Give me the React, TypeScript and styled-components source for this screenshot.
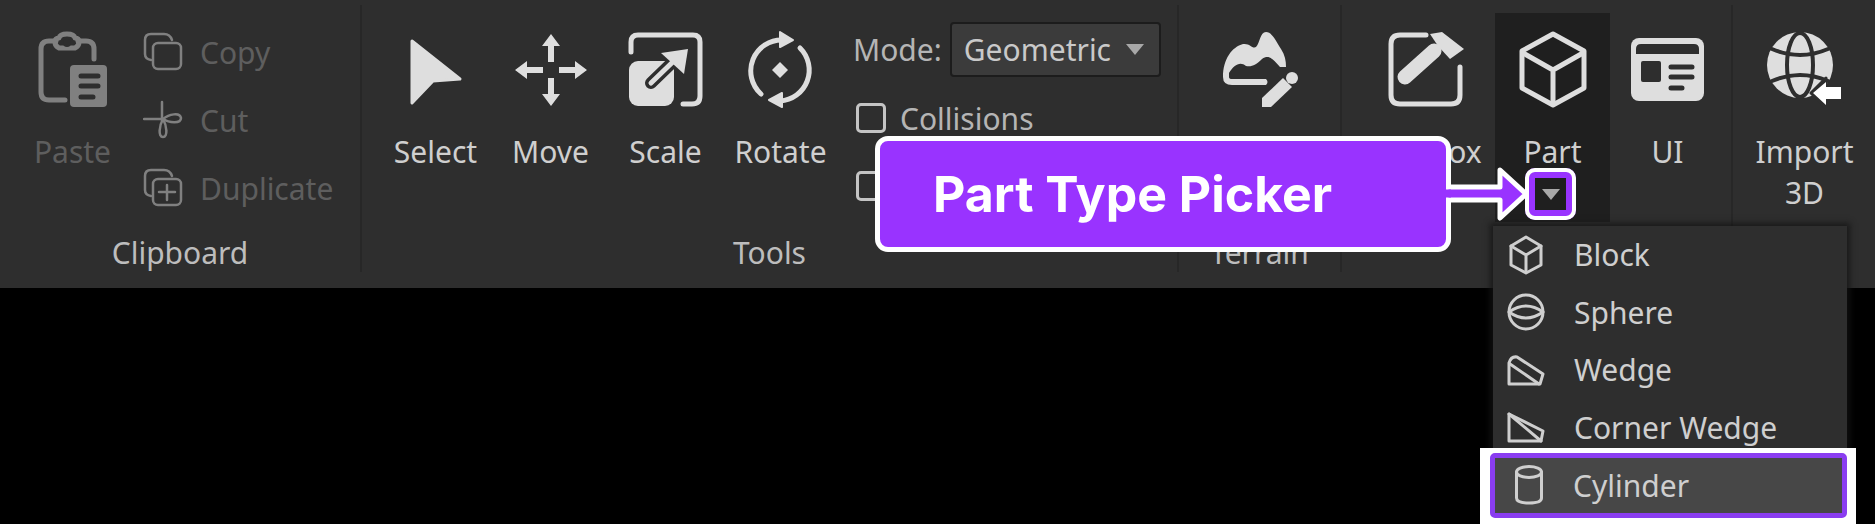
import React from "react";
import styled, { createGlobalStyle } from "styled-components";

const Global = createGlobalStyle`
  html, body { margin: 0; padding: 0; background: #000; overflow: hidden; }
  body { font-family: "Noto Sans", "Open Sans", sans-serif; }
`;

const Page = styled.div`
  position: relative;
  width: 1875px;
  height: 524px;
  background: #000;
  overflow: hidden;
`;
const Ribbon = styled.div`
  display: flex;
  height: 288px;
  background: #2e2e2e;
`;
const Group = styled.section<{ $width: number; $pad: number }>`
  width: ${(p) => p.$width}px;
  flex: none;
  box-sizing: border-box;
  padding-left: ${(p) => p.$pad}px;
  display: flex;
  flex-direction: column;
`;
const GroupBody = styled.div`
  height: 232px;
  display: flex;
  align-items: flex-start;
`;
const GroupLabel = styled.div<{ $shift?: number }>`
  height: 42px;
  line-height: 42px;
  font-size: 30px;
  text-align: center;
  color: #bdbdbd;
  margin-left: ${(p) => -(p.$shift ?? 0)}px;
`;
const Divider = styled.div`
  flex: none;
  width: 2px;
  margin: 5px 0 16px;
  background: #272727;
`;
const ToolButton = styled.div<{ $active?: boolean; $dim?: boolean }>`
  width: 115px;
  flex: none;
  display: flex;
  flex-direction: column;
  align-items: center;
  box-sizing: border-box;
  padding-top: ${(p) => (p.$active ? 20 : 33)}px;
  margin-top: ${(p) => (p.$active ? 13 : 0)}px;
  height: ${(p) => (p.$active ? 209 : 222)}px;
  background: ${(p) => (p.$active ? "#1f1f1f" : "transparent")};
  color: ${(p) => (p.$dim ? "#5e5e5e" : "#cfcfcf")};
`;
const IconSlot = styled.div`
  height: 74px;
  display: flex;
  align-items: center;
  justify-content: center;
`;
const ToolLabel = styled.div`
  margin-top: 24px;
  font-size: 30px;
  line-height: 41px;
  text-align: center;
  white-space: nowrap;
`;
const SmallColumn = styled.div`
  margin-left: 13px;
  padding-top: 18px;
  display: flex;
  flex-direction: column;
`;
const SmallRow = styled.div`
  height: 68px;
  display: flex;
  align-items: center;
  gap: 17px;
  font-size: 30px;
  color: #5e5e5e;
`;
const OptionColumn = styled.div`
  margin-left: 15px;
  padding-top: 22px;
  display: flex;
  flex-direction: column;
  color: #b5b5b5;
  font-size: 30px;
`;
const ModeRow = styled.div`
  height: 55px;
  display: flex;
  align-items: center;
  gap: 8px;
  margin-bottom: 7px;
`;
const Select = styled.div`
  width: 211px;
  height: 55px;
  box-sizing: border-box;
  padding: 0 15px 0 12px;
  display: flex;
  align-items: center;
  justify-content: space-between;
  background: #3b3b3b;
  border: 2px solid #1c1c1c;
  border-radius: 4px;
  color: #c9c9c9;
`;
const Caret = styled.span`
  width: 0;
  height: 0;
  border-left: 9px solid transparent;
  border-right: 9px solid transparent;
  border-top: 11px solid #a8a8a8;
`;
const CheckRow = styled.label`
  height: 68px;
  display: flex;
  align-items: center;
  gap: 14px;
  margin-left: 3px;
`;
const Check = styled.span`
  width: 30px;
  height: 30px;
  box-sizing: border-box;
  border: 3px solid #c4c4c4;
  border-radius: 5px;
`;
const Glyph = styled.svg<{ $tone?: string }>`
  display: block;
  flex: none;
  color: ${(p) => p.$tone ?? "#dedede"};
`;
const Callout = styled.div`
  position: absolute;
  left: 875px;
  top: 136px;
  width: 576px;
  height: 116px;
  box-sizing: border-box;
  padding-left: 53px;
  display: flex;
  align-items: center;
  background: #9933ff;
  border: 5px solid #fff;
  border-radius: 13px;
  color: #fff;
  font-family: Inter, "Noto Sans", sans-serif;
  font-size: 50px;
  font-weight: 700;
  white-space: nowrap;
`;
const Pointer = styled.svg`
  position: absolute;
  left: 1446px;
  top: 160px;
`;
const Marker = styled.div`
  position: absolute;
  left: 1525px;
  top: 168px;
  width: 51px;
  height: 52px;
  box-sizing: border-box;
  display: flex;
  align-items: center;
  justify-content: center;
  background: #1f1f1f;
  border: 10px solid #9933ff;
  border-radius: 10px;
  outline: 4px solid #fff;
  outline-offset: -4px;
  box-shadow: inset 0 0 0 1px #1f1f1f;
`;
const Menu = styled.div`
  position: absolute;
  left: 1493px;
  top: 226px;
  width: 354px;
  background: #2e2e2e;
  box-shadow: 0 0 6px 3px rgba(20, 20, 20, 0.8);
`;
const MenuRow = styled.div`
  height: 57.5px;
  display: flex;
  align-items: center;
  font-size: 30px;
  color: #cfcfcf;
  white-space: nowrap;
`;
const MenuIconSlot = styled.div`
  width: 81px;
  padding-left: 14px;
  box-sizing: border-box;
  flex: none;
`;
const Highlight = styled.div`
  position: relative;
  margin: -8px -9px 0 -13px;
  padding: 5px 9px 6px 10px;
  background: #fff;
`;
const HighlightInner = styled.div`
  height: 65px;
  box-sizing: border-box;
  border: 5px solid #8a3df0;
  border-radius: 5px;
  background: #474747;
  display: flex;
  align-items: center;
  font-size: 30px;
  color: #cfcfcf;
`;
const CylinderSlot = styled.div`
  width: 78px;
  padding-left: 19px;
  box-sizing: border-box;
  flex: none;
`;

const Box = (x: number, y: number, w: number, h: number) => ({
  viewBox: `${x} ${y} ${w} ${h}`,
  width: w,
  height: h,
  fill: "none",
  stroke: "currentColor",
  strokeLinecap: "round" as const,
  strokeLinejoin: "round" as const,
});

const PasteIcon = () => (
  <Glyph $tone="#808080" {...Box(40, 31, 72, 78)} strokeWidth={5}>
    <path d="M68 100H52q-8 0-8-8V49q0-8 8-8h7M81 41h8q8 0 8 8v10" />
    <path d="M58 42q0-4 4-4 1-4 8-4t8 4q4 0 4 4t-4 6H62q-4-2-4-6Z" />
    <circle cx="70" cy="43" r="4" fill="#2e2e2e" strokeWidth={0} />
    <path d="M77 65h29q4 0 4 4v34q0 4-4 4H77q-4 0-4-4V69q0-4 4-4Z" fill="currentColor" strokeWidth={0} />
    <path d="M84 76h17M84 86h17M84 97h12" stroke="#2e2e2e" strokeWidth={5} />
  </Glyph>
);
const CopyIcon = () => (
  <Glyph $tone="#808080" {...Box(142, 30, 40, 40)} strokeWidth={2.5}>
    <path d="M150 58q-6-1-6-6V38q0-6 6-6h13q6 0 8 6" />
    <rect x="152" y="41" width="28" height="26" rx="5" />
  </Glyph>
);
const CutIcon = () => (
  <Glyph $tone="#808080" {...Box(142, 98, 40, 40)} strokeWidth={2.5}>
    <path d="M161 100v19M143 117h20" />
    <path d="M162 117c6-5 17-7 18-1 0 6-12 5-18 1Z" />
    <path d="M162 117c-4 7-5 18 0 18 5 0 4-11 0-18Z" />
  </Glyph>
);
const DuplicateIcon = () => (
  <Glyph $tone="#808080" {...Box(142, 166, 40, 40)} strokeWidth={2.5}>
    <path d="M150 194q-6-1-6-6v-14q0-6 6-6h13q6 0 8 6" />
    <rect x="152" y="177" width="28" height="26" rx="5" />
    <path d="M166 183v15M158 190h16" />
  </Glyph>
);
const SelectIcon = () => (
  <Glyph {...Box(406, 34, 60, 74)} fill="currentColor" strokeWidth={3}>
    <path d="M412 42 460 80 433 82 412 104Z" />
  </Glyph>
);
const MoveIcon = () => (
  <Glyph {...Box(512, 33, 76, 76)} strokeWidth={0} fill="currentColor">
    <path d="M550 35 559 47H553V63H547V47H541ZM550 107 541 95H547V79H553V95H559ZM514 71 526 62V68H542V74H526V80ZM586 71 574 80V74H558V68H574V62Z" />
  </Glyph>
);
const ScaleIcon = () => (
  <Glyph {...Box(626, 32, 78, 78)} strokeWidth={5}>
    <path d="M630 53V43q0-7 7-7h55q7 0 7 7v54q0 8-8 8h-9" />
    <rect x="628" y="62" width="45" height="45" rx="9" fill="currentColor" strokeWidth={0} />
    <path d="M650 84 680 55" stroke="#2e2e2e" strokeWidth={12} />
    <path d="M650 84 680 55" strokeWidth={5} />
    <path d="M660 54 687 50 683 75" strokeWidth={0} fill="currentColor" />
  </Glyph>
);
const RotateIcon = () => (
  <Glyph {...Box(744, 32, 74, 78)} strokeWidth={5}>
    <path d="M761 95A31 31 0 0 1 783 41" />
    <path d="M800 49A31 31 0 0 1 780 102" />
    <path d="M780 33 793 41 780 48Z" fill="currentColor" strokeWidth={2} />
    <path d="M782 94 769 101 782 108Z" fill="currentColor" strokeWidth={2} />
    <path d="M780 63 788 71 780 79 772 71Z" fill="currentColor" strokeWidth={0} />
  </Glyph>
);
const TerrainIcon = () => (
  <Glyph {...Box(1220, 31, 80, 80)} strokeWidth={0} fill="currentColor">
    <path d="M1223 78C1223 60 1232 48 1243 45 1250 44 1252 50 1256 48 1260 44 1260 33 1266 33 1272 33 1276 42 1281 50 1285 56 1286 62 1286 68L1280 68C1272 58 1268 56 1262 60 1256 66 1252 68 1246 67 1240 62 1234 66 1229 74L1229 78Q1229 80 1232 80H1266Q1269 83 1266 86H1232Q1223 86 1223 78Z" />
    <path d="M1262 99 1283 79 1292 88 1271 108H1262Z" />
    <circle cx="1292" cy="79" r="6" />
  </Glyph>
);
const ToolboxIcon = () => (
  <Glyph {...Box(1386, 32, 78, 78)} strokeWidth={5}>
    <path d="M1424 36H1398q-9 0-9 9v51q0 9 9 9h51q9 0 9-9V68" />
    <path d="M1403 78 1432 52" strokeWidth={15} />
    <path d="M1428 35 1440 33 1462 50 1448 60 1436 47Z" fill="currentColor" strokeWidth={0} />
  </Glyph>
);
const PartIcon = () => (
  <Glyph {...Box(1518, 32, 68, 78)} strokeWidth={5}>
    <path d="M1552 35 1583 52V89L1552 106 1521 89V52Z" />
    <path d="M1522 54 1552 71 1582 54M1552 71V105" />
  </Glyph>
);
const UiIcon = () => (
  <Glyph {...Box(1628, 38, 76, 66)} strokeWidth={0}>
    <rect x="1629" y="39" width="73" height="63" rx="8" fill="currentColor" />
    <path d="M1634 55V50q0-5 5-5h53q5 0 5 5v5Z" fill="#2e2e2e" />
    <rect x="1639" y="62" width="20" height="21" rx="2" fill="#2e2e2e" />
    <path d="M1669 68H1690M1669 78H1690M1669 89H1680" stroke="#2e2e2e" strokeWidth={5} />
  </Glyph>
);
const ImportIcon = () => (
  <Glyph {...Box(1766, 32, 78, 78)} strokeWidth={4}>
    <circle cx="1800" cy="66" r="33" fill="currentColor" stroke="none" />
    <ellipse cx="1800" cy="66" rx="13" ry="32" stroke="#2e2e2e" />
    <path d="M1772 50Q1800 62 1828 50M1772 82Q1800 70 1828 82" stroke="#2e2e2e" />
    <path d="M1811 94 1826 79V86H1843V102H1826V109Z" fill="#2e2e2e" stroke="#2e2e2e" strokeWidth={3} />
    <path d="M1813 94 1826 83V88H1841V100H1826V106Z" fill="#fff" stroke="none" />
  </Glyph>
);
const BlockIcon = () => (
  <Glyph $tone="#cfcfcf" {...Box(1508, 234, 38, 40)} strokeWidth={3}>
    <path d="M1527 236 1542 245V264L1527 272 1512 264V245Z" />
    <path d="M1512 245 1527 254 1542 245M1527 254V271" />
  </Glyph>
);
const SphereIcon = () => (
  <Glyph $tone="#cfcfcf" {...Box(1508, 293, 38, 38)} strokeWidth={3}>
    <circle cx="1527" cy="312" r="17" />
    <path d="M1510 312Q1527 300 1544 312Q1527 324 1510 312Z" />
  </Glyph>
);
const WedgeIcon = () => (
  <Glyph $tone="#cfcfcf" {...Box(1508, 351, 38, 34)} strokeWidth={3}>
    <path d="M1510 361Q1512 354 1518 355L1544 372 1541 382H1510Z" />
    <path d="M1511 362 1540 382" />
  </Glyph>
);
const CornerIcon = () => (
  <Glyph $tone="#cfcfcf" {...Box(1508, 411, 38, 31)} strokeWidth={3}>
    <path d="M1510 413 1544 430 1542 440H1510Z" />
    <path d="M1510 413 1542 440" />
  </Glyph>
);
const CylinderIcon = () => (
  <Glyph $tone="#cfcfcf" {...Box(1512, 464, 30, 44)} strokeWidth={3}>
    <ellipse cx="1527" cy="472" rx="12.5" ry="5.5" />
    <path d="M1514.5 472V498Q1514.5 503 1527 503T1539.5 498V472" />
  </Glyph>
);

export default function App() {
  return (
    <Page>
      <Global />
      <Ribbon>
        <Group $width={360} $pad={15}>
          <GroupBody>
            <ToolButton $dim>
              <IconSlot><PasteIcon /></IconSlot>
              <ToolLabel>Paste</ToolLabel>
            </ToolButton>
            <SmallColumn>
              <SmallRow><CopyIcon />Copy</SmallRow>
              <SmallRow><CutIcon />Cut</SmallRow>
              <SmallRow><DuplicateIcon />Duplicate</SmallRow>
            </SmallColumn>
          </GroupBody>
          <GroupLabel $shift={15}>Clipboard</GroupLabel>
        </Group>
        <Divider />
        <Group $width={815} $pad={16}>
          <GroupBody>
            <ToolButton><IconSlot><SelectIcon /></IconSlot><ToolLabel>Select</ToolLabel></ToolButton>
            <ToolButton><IconSlot><MoveIcon /></IconSlot><ToolLabel>Move</ToolLabel></ToolButton>
            <ToolButton><IconSlot><ScaleIcon /></IconSlot><ToolLabel>Scale</ToolLabel></ToolButton>
            <ToolButton><IconSlot><RotateIcon /></IconSlot><ToolLabel>Rotate</ToolLabel></ToolButton>
            <OptionColumn>
              <ModeRow>Mode:<Select>Geometric<Caret /></Select></ModeRow>
              <CheckRow><Check />Collisions</CheckRow>
              <CheckRow><Check />Join Surfaces</CheckRow>
            </OptionColumn>
          </GroupBody>
          <GroupLabel $shift={16}>Tools</GroupLabel>
        </Group>
        <Divider />
        <Group $width={161} $pad={23}>
          <GroupBody>
            <ToolButton><IconSlot><TerrainIcon /></IconSlot><ToolLabel>Editor</ToolLabel></ToolButton>
          </GroupBody>
          <GroupLabel $shift={23}>Terrain</GroupLabel>
        </Group>
        <Divider />
        <Group $width={389} $pad={27}>
          <GroupBody>
            <ToolButton><IconSlot><ToolboxIcon /></IconSlot><ToolLabel>Toolbox</ToolLabel></ToolButton>
            <div style={{ width: 11 }} />
            <ToolButton $active><IconSlot><PartIcon /></IconSlot><ToolLabel>Part</ToolLabel></ToolButton>
            <ToolButton><IconSlot><UiIcon /></IconSlot><ToolLabel>UI</ToolLabel></ToolButton>
          </GroupBody>
          <GroupLabel $shift={27}>Insert</GroupLabel>
        </Group>
        <Divider />
        <Group $width={141} $pad={14}>
          <GroupBody>
            <ToolButton><IconSlot><ImportIcon /></IconSlot><ToolLabel>Import<br />3D</ToolLabel></ToolButton>
          </GroupBody>
        </Group>
      </Ribbon>

      <Menu>
        <MenuRow><MenuIconSlot><BlockIcon /></MenuIconSlot>Block</MenuRow>
        <MenuRow><MenuIconSlot><SphereIcon /></MenuIconSlot>Sphere</MenuRow>
        <MenuRow><MenuIconSlot><WedgeIcon /></MenuIconSlot>Wedge</MenuRow>
        <MenuRow><MenuIconSlot><CornerIcon /></MenuIconSlot>Corner Wedge</MenuRow>
        <Highlight>
          <HighlightInner><CylinderSlot><CylinderIcon /></CylinderSlot>Cylinder</HighlightInner>
        </Highlight>
      </Menu>

      <Callout>Part Type Picker</Callout>
      <Pointer width="84" height="64" viewBox="1446 160 84 64">
        <path
          d="M1446 187H1500V170L1526 194 1500 218V200H1446Z"
          fill="#9933ff"
          stroke="#fff"
          strokeWidth={5}
          strokeLinejoin="round"
        />
        <rect x="1444" y="189.5" width="7" height="8" fill="#9933ff" />
      </Pointer>
      <Marker><Caret /></Marker>
    </Page>
  );
}
